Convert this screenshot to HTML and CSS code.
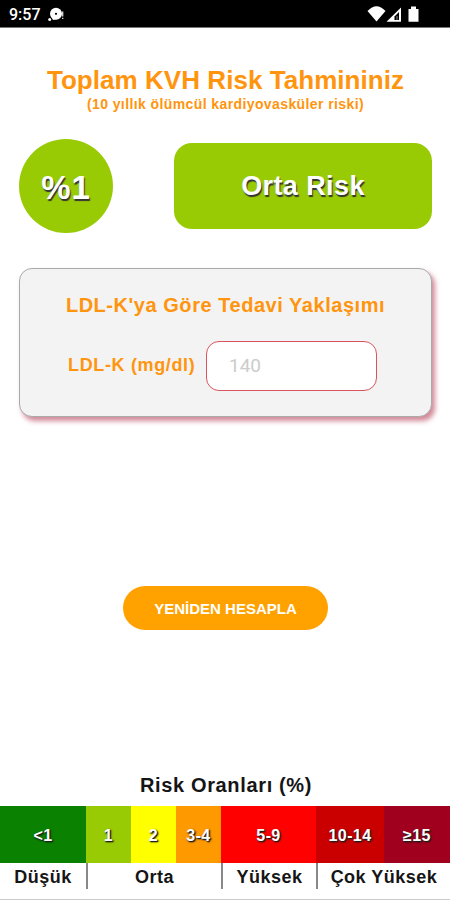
FILE: index.html
```html
<!DOCTYPE html>
<html lang="tr">
<head>
  <meta charset="UTF-8">
  <title>KVH Risk Tahmini</title>
  <link rel="stylesheet" href="styles.css">
</head>
<body>

<div class="status-bar">
  <span class="clock">9:57</span>
  <svg class="notification" width="18" height="16" viewBox="0 0 18 16">
    <circle cx="8" cy="6.800" r="6" fill="#fff"/>
    <circle cx="8" cy="6.800" r="1.100" fill="#000"/>
    <circle cx="1.700" cy="12.600" r="1.500" fill="#fff"/>
    <path d="M3.500 10 L5 13 L9 12 Z" fill="#fff"/>
    <path d="M14.700 4.500 V9.500 M14.700 10.700 V12" stroke="#ddd" stroke-width="1.300"/>
  </svg>
  <svg class="signals" width="54" height="18" viewBox="0 0 54 18">
    <path d="M0.500 5 Q9.500 -4.500 18.500 5 L9.500 15.500 Z" fill="#fff"/>
    <path d="M19.500 15.700 L34 1.500 V15.700 Z" fill="#fff"/>
    <path d="M27.500 10.500 L32 6 V14 H27.500 Z" fill="#000"/>
    <path d="M30 10 V14" stroke="#888" stroke-width="1"/>
    <path d="M41.500 3 H44 V0.500 H49 V3 H51.500 V15.700 H41.500 Z" fill="#fff"/>
  </svg>
</div>

<header>
  <h1>Toplam KVH Risk Tahmininiz</h1>
  <p>(10 yıllık ölümcül kardiyovasküler riski)</p>
</header>

<div class="result">
  <div class="score"><span>%1</span></div>
  <div class="level"><span>Orta Risk</span></div>
</div>

<div class="ldl-card">
  <h2>LDL-K'ya Göre Tedavi Yaklaşımı</h2>
  <div class="ldl-row">
    <label for="ldl">LDL-K (mg/dl)</label>
    <input type="text" id="ldl" placeholder="140">
  </div>
</div>

<button class="recalculate">YENİDEN HESAPLA</button>

<footer>
  <h3>Risk Oranları (%)</h3>
  <div class="scale">
    <div class="low">&lt;1</div>
    <div class="mid1">1</div>
    <div class="mid2">2</div>
    <div class="mid3">3-4</div>
    <div class="high">5-9</div>
    <div class="very1">10-14</div>
    <div class="very2">≥15</div>
  </div>
  <div class="names">
    <div>Düşük</div>
    <div>Orta</div>
    <div>Yüksek</div>
    <div>Çok Yüksek</div>
  </div>
</footer>

</body>
</html>
```
FILE: styles.css
```css
* {
  box-sizing: border-box;
}

body {
  margin: 0;
  height: 900px;
  display: flex;
  flex-direction: column;
  overflow: hidden;
  background: #fff;
  color: #151515;
  font-family: "Liberation Sans", Arial, sans-serif;
}

h1, h2, h3, p {
  margin: 0;
  white-space: nowrap;
}

.status-bar {
  height: 28px;
  flex: none;
  display: flex;
  padding: 6px 29px 0 9px;
  background: #000;
  border-bottom: 1px solid #777;
  color: #fff;
}

.clock {
  font: 500 16px/18px Roboto, sans-serif;
}

.notification {
  margin: 1px 0 0 7px;
}

.signals {
  margin-left: auto;
}

header {
  height: 111px;
  padding-top: 37px;
  color: #ff950e;
  text-align: center;
}

h1 {
  padding-left: 1px;
  font-size: 26px;
  line-height: 30px;
  letter-spacing: 0.05px;
}

header p {
  padding-left: 1px;
  font-size: 14px;
  font-weight: bold;
  line-height: 18px;
  letter-spacing: 0.4px;
}

.result {
  display: flex;
  justify-content: space-between;
  align-items: center;
  height: 94px;
  padding: 0 18px 0 19px;
}

.score,
.level {
  display: flex;
  justify-content: center;
  align-items: center;
  background: #99cb05;
  color: #fff;
  font-weight: bold;
  text-shadow: 1px 2px 1px #333;
}

.score {
  width: 94px;
  height: 94px;
  padding-top: 3px;
  border-radius: 50%;
  font-size: 33px;
  letter-spacing: 1px;
}

.level {
  width: 258px;
  height: 86px;
  border-radius: 18px;
  font-size: 27px;
  letter-spacing: 0.4px;
}

.ldl-card {
  height: 149px;
  margin: 35px 18px 0 19px;
  padding-top: 24px;
  border: 1px solid #aaa;
  border-radius: 13px;
  background: #f3f3f3;
  box-shadow: 3px 4px 5px rgba(165, 20, 50, 0.5);
  color: #ff950e;
  text-align: center;
}

h2 {
  font-size: 20px;
  line-height: 24px;
  letter-spacing: 0.54px;
}

.ldl-row {
  display: flex;
  align-items: center;
  margin-top: 24px;
  padding-left: 48px;
}

.ldl-row label {
  width: 138px;
  padding-bottom: 1px;
  text-align: left;
  white-space: nowrap;
  font-size: 18px;
  font-weight: bold;
  letter-spacing: 0.65px;
}

.ldl-row input {
  width: 171px;
  height: 50px;
  padding: 0 22px 2px;
  border: 1px solid #d9545f;
  border-radius: 13px;
  background: #fff;
  font: 19px Roboto, sans-serif;
}

.ldl-row input::placeholder {
  color: #ccc;
}

.recalculate {
  width: 205px;
  height: 44px;
  margin: 169px auto 0 123px;
  border: none;
  border-radius: 22px;
  background: #ffa200;
  color: #fff;
  font: bold 15px "Liberation Sans", Arial, sans-serif;
  white-space: nowrap;
}

footer {
  height: 129px;
  margin-top: auto;
  border-bottom: 1px solid #ccc;
}

h3 {
  height: 35px;
  padding-left: 2px;
  font-size: 20px;
  line-height: 28px;
  letter-spacing: 0.65px;
  text-align: center;
}

.scale,
.names {
  display: grid;
}

.scale {
  grid-template-columns: 86px 45px 45px 45px 95px 68px 66px;
  height: 57px;
}

.scale div {
  display: flex;
  justify-content: center;
  align-items: center;
  padding-top: 3px;
  color: #fff;
  font-size: 16px;
  font-weight: bold;
  letter-spacing: 0.4px;
  text-shadow: 1px 1px 2px #111, 1px 1px 1px #333;
}

.low { background: #0a8100; }
.mid1 { background: #99cb05; }
.mid2 { background: #ff0; }
.mid3 { background: #ff9900; }
.high { background: #f00; }
.very1 { background: #ca0000; }
.very2 { background: #a0001e; }

.names {
  grid-template-columns: 88px 135px 95px 132px;
  height: 26px;
  font-size: 18px;
  font-weight: bold;
  line-height: 29px;
  letter-spacing: 0.5px;
  text-align: center;
}

.names div {
  height: 26px;
  border-right: 2px solid #888;
  white-space: nowrap;
}

.names div:last-child {
  border-right: none;
}
```
